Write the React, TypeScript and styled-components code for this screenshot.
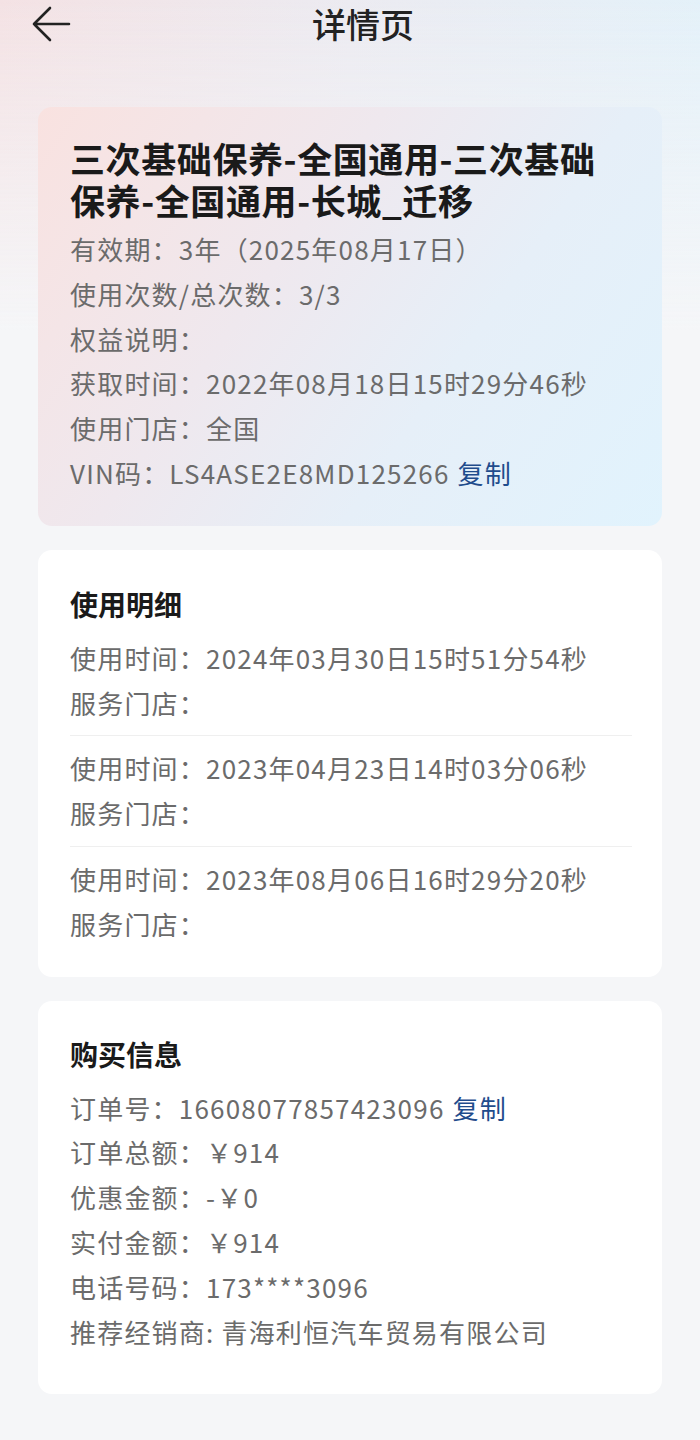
import React from 'react';
import styled, { createGlobalStyle } from 'styled-components';

const GlobalStyle = createGlobalStyle`
  html, body {
    margin: 0;
    padding: 0;
    background: #f5f6f8;
    font-family: "Noto Sans CJK SC", "Noto Sans", sans-serif;
  }
`;

const Page = styled.div`
  min-height: 1440px;
  box-sizing: border-box;
  padding: 3px 0 40px;
  background:
    linear-gradient(180deg, rgba(245, 246, 248, 0) 0px, #f5f6f8 330px),
    linear-gradient(90deg, #f4e2e4 0%, #ecebf1 50%, #e4f1f9 100%);
`;

const Header = styled.header`
  display: grid;
  grid-template-columns: 80px 1fr 54px;
  align-items: center;
  height: 42px;
  margin-bottom: 62px;
`;

const BackButton = styled.button`
  border: 0;
  background: none;
  padding: 0 0 0 31px;
  display: flex;
  align-items: center;
  cursor: pointer;
`;

const PageTitle = styled.h1`
  margin: 0;
  text-align: center;
  font-size: 34px;
  font-weight: 500;
  color: #222;
  line-height: 42px;
`;

const Card = styled.section<{ $tinted?: boolean; $bottom?: number; $top?: number }>`
  margin: 0 38px 24px 38px;
  border-radius: 14px;
  padding: ${p => p.$top ?? 33}px 30px ${p => p.$bottom ?? 30}px 32px;
  background: ${p =>
    p.$tinted
      ? 'linear-gradient(125deg, #f9e2e0 0%, #efe8ee 38%, #e6eff8 65%, #e1f3fd 100%)'
      : '#ffffff'};
`;

const ProductName = styled.h2`
  margin: 0 0 6px 0;
  padding-right: 18px;
  font-size: 35px;
  line-height: 42px;
  font-weight: 700;
  letter-spacing: 0.6px;
  color: #1a1a1a;
`;

const SectionTitle = styled.h3`
  margin: 0 0 12px 0;
  font-size: 28px;
  line-height: 40px;
  font-weight: 700;
  color: #1a1a1a;
`;

const Line = styled.div`
  font-size: 26px;
  line-height: 44.8px;
  letter-spacing: 1.2px;
  color: #6b6b6b;
  white-space: nowrap;
`;

const CopyLink = styled.span`
  color: #1f4c8c;
  margin-left: 8px;
  cursor: pointer;
`;

const UsageItem = styled.div`
  padding: 10px 0;
  & + & {
    border-top: 1px solid #efefef;
  }
  &:first-of-type {
    padding-top: 0;
  }
  &:last-of-type {
    padding-bottom: 0;
  }
`;

const usages = [
  '2024年03月30日15时51分54秒',
  '2023年04月23日14时03分06秒',
  '2023年08月06日16时29分20秒',
];

function BackArrow() {
  return (
    <svg width="40" height="40" viewBox="0 0 40 40" fill="none">
      <path
        d="M38 20H3M19 4L3 20L19 36"
        stroke="#222"
        strokeWidth="2.6"
        strokeLinecap="round"
        strokeLinejoin="round"
      />
    </svg>
  );
}

export default function App() {
  return (
    <Page>
      <GlobalStyle />
      <Header>
        <BackButton aria-label="返回">
          <BackArrow />
        </BackButton>
        <PageTitle>详情页</PageTitle>
        <div />
      </Header>

      <Card $tinted $top={30} $bottom={30}>
        <ProductName>三次基础保养-全国通用-三次基础保养-全国通用-长城_迁移</ProductName>
        <Line>有效期：3年（2025年08月17日）</Line>
        <Line>使用次数/总次数：3/3</Line>
        <Line>权益说明：</Line>
        <Line>获取时间：2022年08月18日15时29分46秒</Line>
        <Line>使用门店：全国</Line>
        <Line>
          VIN码：LS4ASE2E8MD125266<CopyLink>复制</CopyLink>
        </Line>
      </Card>

      <Card $top={34} $bottom={30}>
        <SectionTitle>使用明细</SectionTitle>
        {usages.map(time => (
          <UsageItem key={time}>
            <Line>使用时间：{time}</Line>
            <Line>服务门店：</Line>
          </UsageItem>
        ))}
      </Card>

      <Card $top={33} $bottom={40}>
        <SectionTitle>购买信息</SectionTitle>
        <Line>
          订单号：16608077857423096<CopyLink>复制</CopyLink>
        </Line>
        <Line>订单总额：￥914</Line>
        <Line>优惠金额：-￥0</Line>
        <Line>实付金额：￥914</Line>
        <Line>电话号码：173****3096</Line>
        <Line>推荐经销商: 青海利恒汽车贸易有限公司</Line>
      </Card>
    </Page>
  );
}
